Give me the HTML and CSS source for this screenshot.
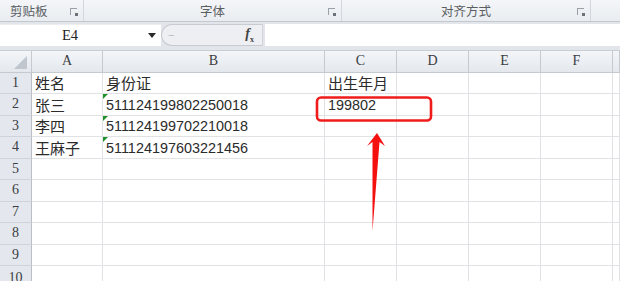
FILE: index.html
```html
<!DOCTYPE html>
<html>
<head>
    <meta charset="utf-8">
    <title>身份证提取出生年月</title>
    <link rel="stylesheet" href="styles.css">
</head>
<body>
    <div class="ribbon">
        <div class="group clip"><span>剪贴板</span><i class="launcher"></i></div>
        <div class="group font"><span>字体</span><i class="launcher"></i></div>
        <div class="group align"><span>对齐方式</span><i class="launcher"></i></div>
        <div class="group rest"></div>
    </div>

    <div class="formula-bar">
        <div class="name-box">
            <span class="cell-ref">E4</span>
            <span class="drop"></span>
        </div>
        <div class="fx-pill">
            <span class="minus">&minus;</span>
            <span class="fx"><i>f</i><sub>x</sub></span>
        </div>
        <div class="formula-input"></div>
    </div>

    <div class="sheet">
        <div class="grid">
            <div class="hd corner"><i class="tri"></i></div>
            <div class="hd col">A</div>
            <div class="hd col">B</div>
            <div class="hd col">C</div>
            <div class="hd col">D</div>
            <div class="hd col">E</div>
            <div class="hd col">F</div>
            <div class="hd col"></div>

            <div class="hd row">1</div>
            <div class="c zh">姓名</div>
            <div class="c zh">身份证</div>
            <div class="c zh">出生年月</div>
            <div class="c"></div><div class="c"></div><div class="c"></div><div class="c"></div>

            <div class="hd row">2</div>
            <div class="c zh">张三</div>
            <div class="c num flag">511124199802250018</div>
            <div class="c num">199802</div>
            <div class="c"></div><div class="c"></div><div class="c"></div><div class="c"></div>

            <div class="hd row">3</div>
            <div class="c zh">李四</div>
            <div class="c num flag">511124199702210018</div>
            <div class="c"></div>
            <div class="c"></div><div class="c"></div><div class="c"></div><div class="c"></div>

            <div class="hd row">4</div>
            <div class="c zh">王麻子</div>
            <div class="c num flag">511124197603221456</div>
            <div class="c"></div>
            <div class="c"></div><div class="c"></div><div class="c"></div><div class="c"></div>

            <div class="hd row">5</div>
            <div class="c"></div><div class="c"></div><div class="c"></div><div class="c"></div><div class="c"></div><div class="c"></div><div class="c"></div>
            <div class="hd row">6</div>
            <div class="c"></div><div class="c"></div><div class="c"></div><div class="c"></div><div class="c"></div><div class="c"></div><div class="c"></div>
            <div class="hd row">7</div>
            <div class="c"></div><div class="c"></div><div class="c"></div><div class="c"></div><div class="c"></div><div class="c"></div><div class="c"></div>
            <div class="hd row">8</div>
            <div class="c"></div><div class="c"></div><div class="c"></div><div class="c"></div><div class="c"></div><div class="c"></div><div class="c"></div>
            <div class="hd row">9</div>
            <div class="c"></div><div class="c"></div><div class="c"></div><div class="c"></div><div class="c"></div><div class="c"></div><div class="c"></div>
            <div class="hd row last">10</div>
            <div class="c"></div><div class="c"></div><div class="c"></div><div class="c"></div><div class="c"></div><div class="c"></div><div class="c"></div>
        </div>

        <!-- annotation: red box round C2 and the arrow pointing at it -->
        <svg class="mark" width="620" height="230" viewBox="0 51 620 230">
            <rect x="317" y="97.5" width="114" height="23" rx="4" ry="4" fill="none" stroke="#f01c1c" stroke-width="2.6"/>
            <polygon points="377,133 385,146 379.5,142 372.5,231 372.5,142 367,146" fill="#f51010"/>
        </svg>
    </div>
</body>
</html>
```

FILE: styles.css
```css
html, body {
    margin: 0;
    padding: 0;
    width: 620px;
    height: 281px;
    overflow: hidden;
    background: #fff;
    font-family: "Liberation Sans", "Noto Sans CJK SC", sans-serif;
}

/* ribbon group labels */
.ribbon {
    display: flex;
    height: 21px;
    background: linear-gradient(#f4f6f9, #e9ecf0);
    border-bottom: 1px solid #c3c8cf;
}
.group {
    position: relative;
    display: flex;
    align-items: center;
    justify-content: center;
    border-right: 1px solid #d3d7dd;
    font-size: 12.5px;
    color: #5a5e63;
    font-family: "Noto Sans CJK SC", sans-serif;
}
.group.clip { width: 83px; justify-content: flex-start; }
.group.clip span { margin-left: 10px; }
.group.font { width: 257px; }
.group.align { width: 248px; }
.group.rest { flex: 1; border-right: none; }
.launcher {
    position: absolute;
    right: 6px;
    top: 8px;
    width: 6px;
    height: 6px;
    border-left: 1px solid #9aa0a8;
    border-top: 1px solid #9aa0a8;
}
.launcher::after {
    content: "";
    position: absolute;
    right: -1px;
    bottom: -1px;
    width: 3px;
    height: 3px;
    background: #6c727a;
}

/* name box + formula */
.formula-bar {
    display: flex;
    height: 22px;
    padding: 2px 0 4px;
    background: #e2e5ea;
    border-bottom: 1px solid #c9ced5;
}
.name-box {
    width: 161px;
    display: flex;
    align-items: center;
    background: #fff;
    border-top: 1px solid #eceef1;
}
.cell-ref {
    width: 140px;
    text-align: center;
    font-family: "Liberation Serif", serif;
    font-size: 14.5px;
    color: #222;
}
.drop {
    width: 0;
    height: 0;
    margin-left: 8px;
    border-left: 4px solid transparent;
    border-right: 4px solid transparent;
    border-top: 5px solid #2a2a2a;
}
.fx-pill {
    width: 86px;
    display: flex;
    align-items: center;
    justify-content: space-between;
    padding: 0 8px 0 6px;
    background: #edeff2;
    border: 1px solid #c8ccd2;
    border-radius: 11px 0 0 11px;
    border-right: 1px solid #d0d4da;
}
.minus {
    font-size: 11px;
    color: #b5b9bf;
}
.fx {
    font-family: "Liberation Serif", serif;
    font-weight: bold;
    font-size: 14px;
    color: #444;
}
.fx sub {
    font-size: 8px;
}
.formula-input {
    flex: 1;
    margin-left: 2px;
    background: #fff;
}

/* worksheet */
.sheet {
    position: relative;
}
.grid {
    display: grid;
    grid-template-columns: 32px 71px 222px 72px 72px 72px 72px 7px;
    grid-auto-rows: 21.5px;
}
.hd {
    display: flex;
    align-items: center;
    justify-content: center;
    box-sizing: border-box;
    font-family: "Liberation Serif", serif;
    font-size: 14px;
    color: #3a3d42;
    border-right: 1px solid #c5cad1;
    border-bottom: 1px solid #c5cad1;
}
.hd.col {
    background: linear-gradient(#f3f5f8, #e4e8ed);
}
.hd.row {
    background: #e4e8ee;
    border-right: 1px solid #b9bfc8;
    border-bottom: 1px solid #cfd4da;
}
.hd.row.last {
    align-items: flex-start;
    padding-top: 4px;
}
.hd.corner {
    position: relative;
    background: linear-gradient(#f3f5f8, #e4e8ed);
}
.tri {
    position: absolute;
    right: 4px;
    bottom: 3px;
    width: 0;
    height: 0;
    border-left: 13px solid transparent;
    border-bottom: 13px solid #c0c6ce;
}
.c {
    position: relative;
    box-sizing: border-box;
    border-right: 1px solid #e0e2e5;
    border-bottom: 1px solid #e0e2e5;
    padding-left: 3px;
    display: flex;
    align-items: flex-end;
    padding-bottom: 1px;
    white-space: nowrap;
    color: #2b2b2b;
}
.c.zh {
    font-family: "Noto Sans CJK SC", sans-serif;
    font-size: 15px;
    line-height: 19px;
}
.c.num {
    font-size: 14.4px;
    line-height: 18px;
}
.c.flag::before {
    content: "";
    position: absolute;
    left: 0;
    top: 0;
    border-top: 5px solid #22912a;
    border-right: 5px solid transparent;
}

.mark {
    position: absolute;
    left: 0;
    top: 0;
    pointer-events: none;
}
```
